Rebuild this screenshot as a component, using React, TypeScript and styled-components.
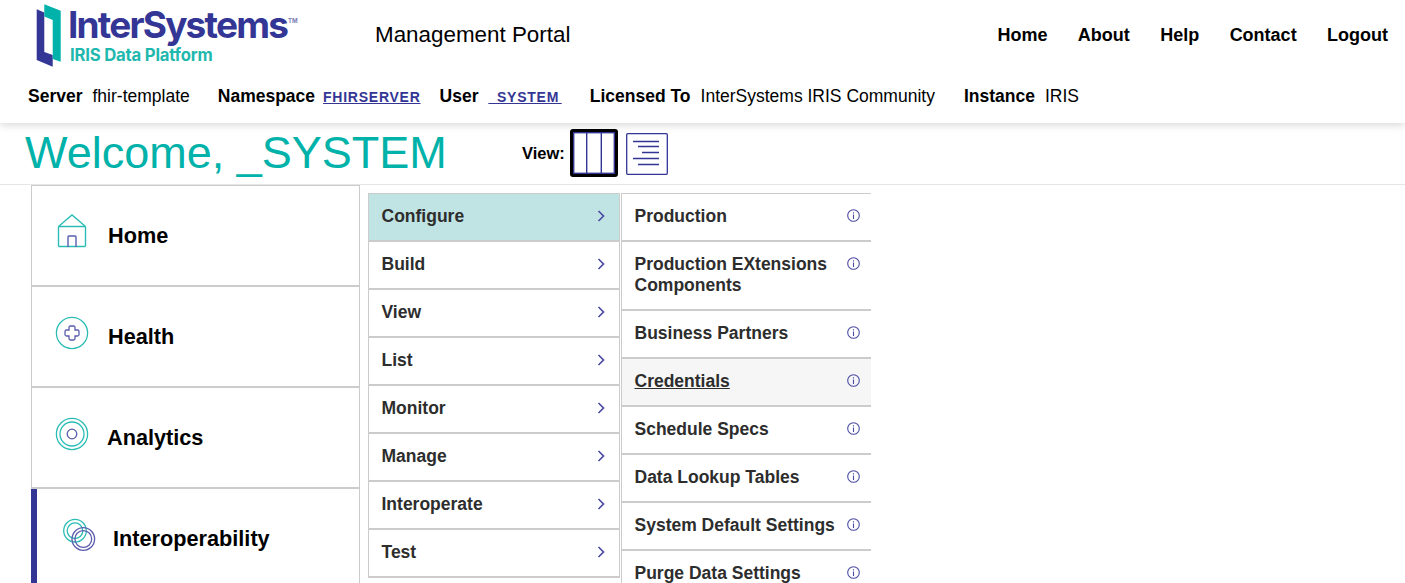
import React from 'react'
import styled, { createGlobalStyle } from 'styled-components'

const GlobalStyle = createGlobalStyle`
  html, body {
    margin: 0;
    height: 583px;
    overflow: hidden;
    background: #fff;
    font-family: "Liberation Sans", Arial, sans-serif;
    color: #000;
  }
`

const Header = styled.header`
  position: relative;
  height: 123px;
  background: #fff;
  box-shadow: 0 2px 8px rgba(0, 0, 0, 0.16);
`
const TopRow = styled.div`
  display: flex;
  align-items: flex-start;
  height: 70px;
  padding-left: 36px;
  padding-right: 17px;
`
const Logo = styled.div`
  display: flex;
  width: 339px;
  padding-top: 4px;
`
const LogoMarkSvg = styled.svg`
  flex: none;
`
const LogoWords = styled.div`
  display: flex;
  flex-direction: column;
  margin-left: 6px;
`
const LogoName = styled.div`
  display: flex;
  font-family: Inter, "Liberation Sans", sans-serif;
  font-weight: 700;
  font-size: 37px;
  line-height: 42px;
  letter-spacing: -1.8px;
  color: #333695;
  sup {
    font-size: 6px;
    line-height: 10px;
    letter-spacing: 0;
    margin: 12px 0 0 1px;
    color: #7a7cb5;
  }
`
const LogoSub = styled.div`
  font-family: Inter, "Liberation Sans", sans-serif;
  font-weight: 700;
  font-size: 16.7px;
  line-height: 17px;
  letter-spacing: -0.2px;
  margin-top: 1px;
  margin-left: 2px;
  color: #1fb8ae;
`
const PortalTitle = styled.div`
  flex: 1;
  font-size: 22.4px;
  line-height: 26px;
  padding-top: 22px;
`
const TopNav = styled.nav`
  display: flex;
  gap: 30.4px;
  padding-top: 25px;
`
const TopLink = styled.a`
  font-size: 18px;
  line-height: 20px;
  font-weight: 700;
  color: #000;
`
const ContextRow = styled.div`
  display: flex;
  align-items: baseline;
  padding-left: 28px;
  padding-top: 15px;
  font-size: 17.5px;
  line-height: 22px;
`
const ContextItem = styled.div<{ $gap: number }>`
  display: flex;
  align-items: baseline;
  margin-right: ${p => p.$gap}px;
`
const ContextLabel = styled.span<{ $gap: number }>`
  font-weight: 700;
  margin-right: ${p => p.$gap}px;
`
const ContextLink = styled.a`
  font-size: 14px;
  font-weight: 700;
  letter-spacing: 0.75px;
  word-spacing: -2px;
  color: #333695;
  text-decoration: underline;
  white-space: pre;
`

const TitleRow = styled.div`
  display: flex;
  align-items: center;
  height: 60px;
  padding-left: 25px;
  padding-bottom: 1px;
  border-bottom: 1px solid #e6e6e6;
`
const Welcome = styled.h1`
  margin: 0;
  width: 497px;
  font-size: 45px;
  line-height: 58px;
  font-weight: 400;
  color: #00b2a9;
`
const ViewLabel = styled.span`
  font-size: 16.5px;
  font-weight: 700;
  margin-right: 5px;
`
const ViewButton = styled.button<{ $active?: boolean }>`
  display: flex;
  padding: 0;
  margin-right: ${p => (p.$active ? 8 : 0)}px;
  margin-top: ${p => (p.$active ? 0 : 2)}px;
  background: #fff;
  border: ${p => (p.$active ? '3px solid #000' : 'none')};
  border-radius: ${p => (p.$active ? 3 : 0)}px;
`

const Columns = styled.main`
  display: flex;
  align-items: flex-start;
  padding-left: 31px;
`
const MainMenu = styled.div`
  width: 329px;
  border-left: 1px solid #ccc;
  border-right: 1px solid #ccc;
  border-top: 1px solid #ccc;
  box-sizing: border-box;
`
const MainItem = styled.div<{ $active?: boolean; $indent: number; $lift: number }>`
  display: flex;
  align-items: center;
  height: 99px;
  border-bottom: 2px solid #ccc;
  padding-left: ${p => p.$indent}px;
  margin-left: ${p => (p.$active ? -1 : 0)}px;
  border-left: ${p => (p.$active ? '6px solid #333695' : 'none')};
  font-size: 21.7px;
  font-weight: 700;
  svg {
    flex: none;
    margin-bottom: ${p => p.$lift}px;
  }
`
const MainLabel = styled.span<{ $gap: number }>`
  margin-left: ${p => p.$gap}px;
  margin-top: 1px;
`
const SubMenu = styled.div<{ $width: number; $left: number; $right?: boolean }>`
  width: ${p => p.$width}px;
  margin-left: ${p => p.$left}px;
  margin-top: 8px;
  box-sizing: border-box;
  border-top: 1px solid #ccc;
  border-left: 1px solid #ccc;
  border-right: ${p => (p.$right ? 'none' : '1px solid #ccc')};
`
const SubItem = styled.div<{ $selected?: boolean; $hovered?: boolean; $tall?: boolean; $pad: number }>`
  display: flex;
  justify-content: space-between;
  box-sizing: border-box;
  height: ${p => (p.$tall ? 69 : 48)}px;
  padding: 12px ${p => p.$pad}px 0 12.5px;
  border-bottom: 2px solid #ccc;
  background: ${p => (p.$selected ? '#bfe4e3' : p.$hovered ? '#f6f6f6' : '#fff')};
  color: #2d2d2d;
  font-size: 17.5px;
  line-height: 21px;
  font-weight: 700;
`
const SubLabel = styled.span<{ $hovered?: boolean }>`
  max-width: 205px;
  text-decoration: ${p => (p.$hovered ? 'underline' : 'none')};
`
const ChevronSvg = styled.svg`
  flex: none;
  margin-top: 4px;
`
const InfoSvg = styled.svg`
  flex: none;
  margin-top: 3px;
`

const teal = '#2bbdb5'
const indigo = '#5a5cad'

const LogoMark = () => (
  <LogoMarkSvg width="26" height="63" viewBox="0 0 26 63">
    <path d="M0.7 5.3 L8.3 8.5 V48 L16.7 51 V62.7 L0.7 56 Z" fill="#333695" />
    <path d="M8.3 0.3 L24.7 6.7 V57.7 L16.7 55 V16 L8.3 12.5 Z" fill="#00b2a9" />
  </LogoMarkSvg>
)

const ColumnsIcon = () => (
  <svg width="42" height="42" viewBox="0 0 42 42" fill="none" stroke="#333695" strokeWidth="1.4">
    <rect x="0.7" y="0.7" width="40.6" height="40.6" />
    <path d="M13.7 1V41M28.3 1V41" />
  </svg>
)

const ListIcon = () => (
  <svg width="42" height="42" viewBox="0 0 42 42" fill="none" stroke="#333695" strokeWidth="1.3">
    <rect x="0.7" y="0.7" width="40.6" height="40.6" rx="1" />
    <path d="M7 8.5H33M12 13.5H33M16 19.5H33M7 25.5H33M12 31.5H33" />
  </svg>
)

const HomeIcon = () => (
  <svg width="30" height="34" viewBox="0 0 30 34" fill="none" strokeWidth="1.4">
    <path d="M1.5 12.5 L15 1 L28.5 12.5" stroke={teal} />
    <rect x="1.5" y="12.5" width="27" height="20" rx="1" stroke={teal} />
    <path d="M11 33 V23 Q11 22 12 22 H18 Q19 22 19 23 V33" stroke={indigo} />
  </svg>
)

const HealthIcon = () => (
  <svg width="34" height="34" viewBox="0 0 34 34" fill="none" strokeWidth="1.3">
    <circle cx="17" cy="17" r="15.6" stroke={teal} />
    <path
      d="M14 11.5 Q14 10 15.5 10 H18.5 Q20 10 20 11.5 V14 H22.5 Q24 14 24 15.5 V18.5 Q24 20 22.5 20 H20 V22.5 Q20 24 18.5 24 H15.5 Q14 24 14 22.5 V20 H11.5 Q10 20 10 18.5 V15.5 Q10 14 11.5 14 H14 Z"
      stroke={indigo}
    />
  </svg>
)

const AnalyticsIcon = () => (
  <svg width="34" height="34" viewBox="0 0 34 34" fill="none" strokeWidth="1.3">
    <circle cx="17" cy="17" r="15.6" stroke={teal} />
    <circle cx="17" cy="17" r="12" stroke={teal} />
    <circle cx="17" cy="17" r="4.8" stroke={indigo} />
  </svg>
)

const InteropIcon = () => (
  <svg width="34" height="34" viewBox="0 0 34 34" fill="none" strokeWidth="1.3">
    <circle cx="13" cy="12.7" r="11.3" stroke={teal} />
    <circle cx="13" cy="12.7" r="7.8" stroke={teal} />
    <circle cx="21.3" cy="21" r="11.3" stroke={indigo} />
    <circle cx="21.3" cy="21" r="8.4" stroke={indigo} />
  </svg>
)

const Chevron = () => (
  <ChevronSvg width="8" height="12" viewBox="0 0 8 12" fill="none" stroke="#4a4ca3" strokeWidth="1.7">
    <path d="M1.5 1 L6.5 6 L1.5 11" />
  </ChevronSvg>
)

const InfoIcon = () => (
  <InfoSvg width="13" height="13" viewBox="0 0 13 13" fill="none" stroke="#4a4ca3" strokeWidth="1.1">
    <circle cx="6.5" cy="6.5" r="5.8" />
    <path d="M6.5 5.5V10M6.5 3.2V4.4" />
  </InfoSvg>
)

const middleItems = ['Configure', 'Build', 'View', 'List', 'Monitor', 'Manage', 'Interoperate', 'Test']
const rightItems = [
  'Production',
  'Production EXtensions Components',
  'Business Partners',
  'Credentials',
  'Schedule Specs',
  'Data Lookup Tables',
  'System Default Settings',
  'Purge Data Settings',
]

export default function App() {
  return (
    <>
      <GlobalStyle />
      <Header>
        <TopRow>
          <Logo>
            <LogoMark />
            <LogoWords>
              <LogoName>
                InterSystems<sup>TM</sup>
              </LogoName>
              <LogoSub>IRIS Data Platform</LogoSub>
            </LogoWords>
          </Logo>
          <PortalTitle>Management Portal</PortalTitle>
          <TopNav>
            {['Home', 'About', 'Help', 'Contact', 'Logout'].map(label => (
              <TopLink key={label}>{label}</TopLink>
            ))}
          </TopNav>
        </TopRow>
        <ContextRow>
          <ContextItem $gap={28}>
            <ContextLabel $gap={10}>Server</ContextLabel>fhir-template
          </ContextItem>
          <ContextItem $gap={19}>
            <ContextLabel $gap={8}>Namespace</ContextLabel>
            <ContextLink>FHIRSERVER</ContextLink>
          </ContextItem>
          <ContextItem $gap={28}>
            <ContextLabel $gap={10}>User</ContextLabel>
            <ContextLink>{'_SYSTEM '}</ContextLink>
          </ContextItem>
          <ContextItem $gap={29}>
            <ContextLabel $gap={10}>Licensed To</ContextLabel>InterSystems IRIS Community
          </ContextItem>
          <ContextItem $gap={0}>
            <ContextLabel $gap={10}>Instance</ContextLabel>IRIS
          </ContextItem>
        </ContextRow>
      </Header>
      <TitleRow>
        <Welcome>Welcome, _SYSTEM</Welcome>
        <ViewLabel>View:</ViewLabel>
        <ViewButton $active>
          <ColumnsIcon />
        </ViewButton>
        <ViewButton>
          <ListIcon />
        </ViewButton>
      </TitleRow>
      <Columns>
        <MainMenu>
          <MainItem $indent={25} $lift={10}>
            <HomeIcon />
            <MainLabel $gap={21}>Home</MainLabel>
          </MainItem>
          <MainItem $indent={23} $lift={7}>
            <HealthIcon />
            <MainLabel $gap={19}>Health</MainLabel>
          </MainItem>
          <MainItem $indent={23} $lift={7}>
            <AnalyticsIcon />
            <MainLabel $gap={18}>Analytics</MainLabel>
          </MainItem>
          <MainItem $active $indent={25} $lift={7}>
            <InteropIcon />
            <MainLabel $gap={17}>Interoperability</MainLabel>
          </MainItem>
        </MainMenu>
        <SubMenu $width={252} $left={8}>
          {middleItems.map((label, i) => (
            <SubItem key={label} $selected={i === 0} $pad={14}>
              <SubLabel>{label}</SubLabel>
              <Chevron />
            </SubItem>
          ))}
        </SubMenu>
        <SubMenu $width={250} $left={1} $right>
          {rightItems.map((label, i) => (
            <SubItem key={label} $tall={i === 1} $pad={11} $hovered={label === 'Credentials'}>
              <SubLabel $hovered={label === 'Credentials'}>{label}</SubLabel>
              <InfoIcon />
            </SubItem>
          ))}
        </SubMenu>
      </Columns>
    </>
  )
}
